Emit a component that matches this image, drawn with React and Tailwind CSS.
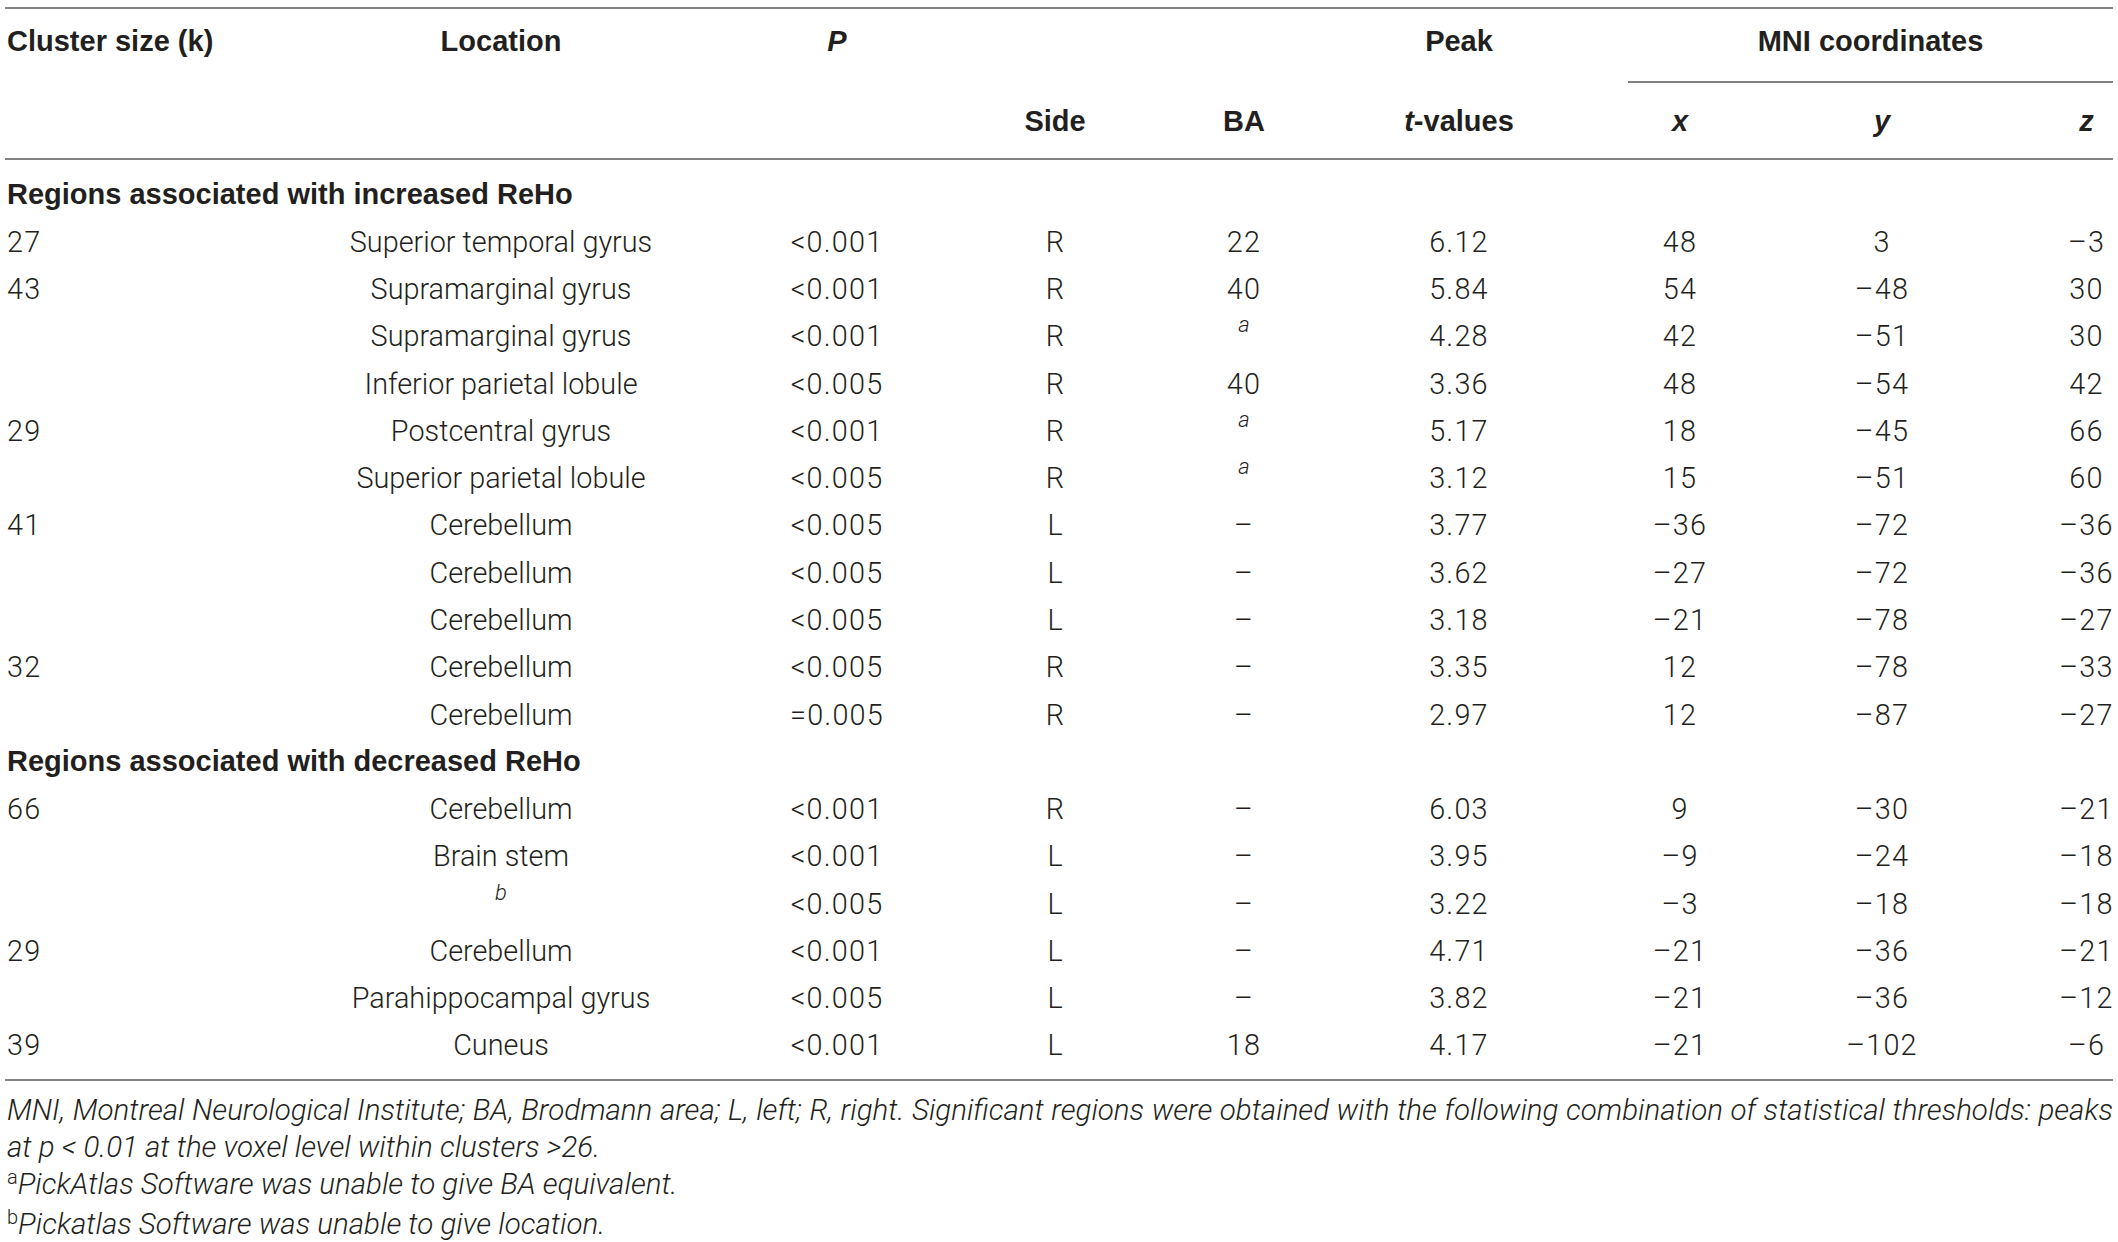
import React from 'react';

const cols = 'grid grid-cols-[235px_522px_150px_286px_92px_338px_104px_300px_81px]';
const bold = "font-['Liberation_Sans',Arial,sans-serif] font-bold text-[29px]";
const num = 'flex justify-center whitespace-nowrap tracking-[1.2px]';

const rows = [
  { section: 'Regions associated with increased ReHo' },
  ['27', 'Superior temporal gyrus', '<0.001', 'R', '22', '6.12', '48', '3', '–3'],
  ['43', 'Supramarginal gyrus', '<0.001', 'R', '40', '5.84', '54', '–48', '30'],
  ['', 'Supramarginal gyrus', '<0.001', 'R', 'a', '4.28', '42', '–51', '30'],
  ['', 'Inferior parietal lobule', '<0.005', 'R', '40', '3.36', '48', '–54', '42'],
  ['29', 'Postcentral gyrus', '<0.001', 'R', 'a', '5.17', '18', '–45', '66'],
  ['', 'Superior parietal lobule', '<0.005', 'R', 'a', '3.12', '15', '–51', '60'],
  ['41', 'Cerebellum', '<0.005', 'L', '–', '3.77', '–36', '–72', '–36'],
  ['', 'Cerebellum', '<0.005', 'L', '–', '3.62', '–27', '–72', '–36'],
  ['', 'Cerebellum', '<0.005', 'L', '–', '3.18', '–21', '–78', '–27'],
  ['32', 'Cerebellum', '<0.005', 'R', '–', '3.35', '12', '–78', '–33'],
  ['', 'Cerebellum', '=0.005', 'R', '–', '2.97', '12', '–87', '–27'],
  { section: 'Regions associated with decreased ReHo' },
  ['66', 'Cerebellum', '<0.001', 'R', '–', '6.03', '9', '–30', '–21'],
  ['', 'Brain stem', '<0.001', 'L', '–', '3.95', '–9', '–24', '–18'],
  ['', 'b', '<0.005', 'L', '–', '3.22', '–3', '–18', '–18'],
  ['29', 'Cerebellum', '<0.001', 'L', '–', '4.71', '–21', '–36', '–21'],
  ['', 'Parahippocampal gyrus', '<0.005', 'L', '–', '3.82', '–21', '–36', '–12'],
  ['39', 'Cuneus', '<0.001', 'L', '18', '4.17', '–21', '–102', '–6'],
];

// footnote marks in the body
function Cell({ value }) {
  if (value === 'a' || value === 'b') {
    return <span className="relative -top-[11px] text-[22px] italic tracking-normal">{value}</span>;
  }
  return value;
}

export default function App() {
  return (
    <div className="w-[2118px] h-[1242px] bg-white px-[5px] pt-[7px] font-['Roboto',sans-serif] text-[#231f20]">
      <div className="h-[2px] bg-[#828282]" />

      {/* HEADER */}
      <div className={`${cols} ${bold} leading-[28px]`}>
        <div className="h-[74px] pt-[18px] pl-[2px] whitespace-nowrap">Cluster size (k)</div>
        <div className="pt-[18px] text-center">Location</div>
        <div className="pt-[18px] text-center italic">P</div>
        <div />
        <div />
        <div className="pt-[18px] text-center">Peak</div>
        <div className="col-span-3 pt-[18px] text-center border-b-2 border-[#828282]">MNI coordinates</div>

        <div className="h-[75px]" />
        <div />
        <div />
        <div className="pt-[24px] text-center">Side</div>
        <div className="pt-[24px] text-center">BA</div>
        <div className="pt-[24px] text-center whitespace-nowrap"><i>t</i>-values</div>
        <div className="pt-[24px] text-center italic">x</div>
        <div className="pt-[24px] text-center italic">y</div>
        <div className="pt-[24px] pl-[28px] text-center italic">z</div>
      </div>
      <div className="h-[2px] bg-[#828282]" />

      {/* BODY */}
      <div className="pt-[11px] pb-[10px]">
        {rows.map((r, i) =>
          r.section ? (
            <div key={i} className={`h-[47.28px] flex items-center pl-[2px] whitespace-nowrap ${bold}`}>
              {r.section}
            </div>
          ) : (
            <div key={i} className={`${cols} h-[47.28px] items-center text-[28.8px] leading-[34px] font-light`}>
              <div className="pl-[2px] tracking-[1.2px]">{r[0]}</div>
              <div className="flex justify-center whitespace-nowrap"><Cell value={r[1]} /></div>
              <div className={num}>{r[2]}</div>
              <div className="flex justify-center">{r[3]}</div>
              <div className={num}><Cell value={r[4]} /></div>
              <div className={num}>{r[5]}</div>
              <div className={num}>{r[6]}</div>
              <div className={num}>{r[7]}</div>
              <div className={`${num} pl-[28px]`}>{r[8]}</div>
            </div>
          )
        )}
      </div>
      <div className="h-[2px] bg-[#828282]" />

      {/* FOOTNOTES */}
      <div className="pt-[11px] pl-[2px] text-[29.5px] leading-[37px] italic font-light">
        <p className="text-justify [text-align-last:justify]">
          MNI, Montreal Neurological Institute; BA, Brodmann area; L, left; R, right. Significant regions were obtained with the following combination of statistical thresholds: peaks
        </p>
        <p>at p &lt; 0.01 at the voxel level within clusters &gt;26.</p>
        <p><span className="not-italic text-[20px] relative -top-[10px]">a</span>PickAtlas Software was unable to give BA equivalent.</p>
        <p><span className="not-italic text-[20px] relative -top-[10px]">b</span>Pickatlas Software was unable to give location.</p>
      </div>
    </div>
  );
}
